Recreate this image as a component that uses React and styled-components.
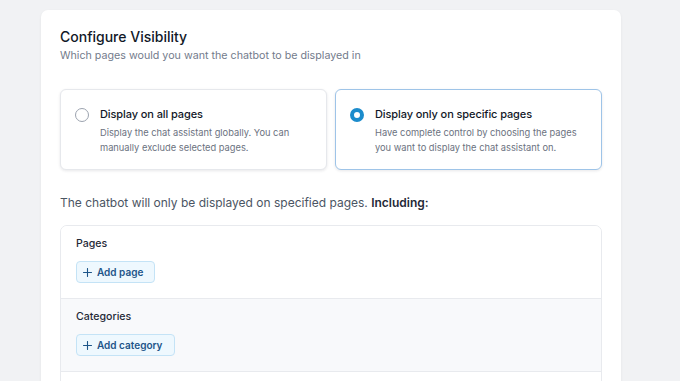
import React from "react";
import styled, { createGlobalStyle } from "styled-components";

const Global = createGlobalStyle`
  html, body { margin: 0; padding: 0; background: #f1f2f4; }
  body { font-family: Inter, "Noto Sans", sans-serif; -webkit-font-smoothing: antialiased; }
  * { box-sizing: border-box; }
`;

const Page = styled.div`
  padding: 10px 0 0 41px;
  height: 381px;
  overflow: hidden;
`;

const Card = styled.div`
  width: 580px;
  background: #fff;
  border-radius: 7px;
  box-shadow: 0 1px 3px rgba(15, 23, 42, 0.06);
  padding: 17px 19px 40px;
`;

const Title = styled.h2`
  margin: 0;
  font-size: 14px;
  line-height: 20px;
  font-weight: 500;
  color: #111827;
`;

const Subtitle = styled.p`
  margin: 0;
  font-size: 10.7px;
  line-height: 18px;
  color: #737b8c;
`;

const Options = styled.div`
  margin-top: 24px;
  display: grid;
  grid-template-columns: 1fr 1fr;
  gap: 8px;
`;

const Option = styled.div`
  display: flex;
  gap: 11px;
  height: 81px;
  padding: 16px 14px 14px;
  border: 1px solid ${(p) => (p.$selected ? "#9ec4e8" : "#e6e8ec")};
  border-radius: 6px;
  background: #fff;
  box-shadow: 0 1px 3px rgba(15, 23, 42, 0.1);
`;

const Radio = styled.span`
  flex: none;
  width: 14px;
  height: 14px;
  margin-top: 1.5px;
  border-radius: 50%;
  border: ${(p) => (p.$checked ? "4px solid #1c8ccc" : "1px solid #9ca3af")};
  background: #fff;
`;

const OptionBody = styled.div`
  display: flex;
  flex-direction: column;
  max-width: 205px;
`;

const OptionTitle = styled.div`
  font-size: 11px;
  line-height: 17px;
  font-weight: 500;
  color: #111827;
  letter-spacing: -0.1px;
`;

const OptionDesc = styled.div`
  margin-top: 2px;
  font-size: 9.3px;
  line-height: 15px;
  color: #6b7280;
`;

const Lead = styled.p`
  margin: 23px 0 0;
  font-size: 12px;
  line-height: 20px;
  color: #4b5563;
  b { font-weight: 600; color: #1f2937; }
`;

const Table = styled.div`
  margin-top: 12px;
  border: 1px solid #e8eaee;
  border-radius: 7px;
  overflow: hidden;
`;

const Section = styled.div`
  padding: 9px 15px 15px;
  background: ${(p) => (p.$alt ? "#f8f9fb" : "#fff")};
  border-top: ${(p) => (p.$first ? "none" : "1px solid #e8eaee")};
  display: flex;
  flex-direction: column;
  align-items: flex-start;
  gap: 9px;
  min-height: 72px;
`;

const Label = styled.div`
  font-size: 10.6px;
  line-height: 17px;
  font-weight: 500;
  color: #1f2937;
`;

const AddButton = styled.button`
  display: inline-flex;
  align-items: center;
  gap: 5px;
  height: 22px;
  padding: 0 11px 0 6px;
  border: 1px solid #c4e3f6;
  border-radius: 4px;
  background: #eef8fe;
  color: #1d5589;
  font-family: inherit;
  font-size: 10px;
  font-weight: 600;
  cursor: pointer;
  svg { flex: none; }
`;

const PlusIcon = () => (
  <svg width="9" height="9" viewBox="0 0 9 9" fill="none">
    <path d="M4.5 0.5v8M0.5 4.5h8" stroke="#1d5589" strokeWidth="1.1" strokeLinecap="round" />
  </svg>
);

export default function App() {
  return (
    <>
      <Global />
      <Page>
        <Card>
          <Title>Configure Visibility</Title>
          <Subtitle>Which pages would you want the chatbot to be displayed in</Subtitle>
          <Options>
            <Option>
              <Radio />
              <OptionBody>
                <OptionTitle>Display on all pages</OptionTitle>
                <OptionDesc>
                  Display the chat assistant globally. You can manually exclude selected pages.
                </OptionDesc>
              </OptionBody>
            </Option>
            <Option $selected>
              <Radio $checked />
              <OptionBody>
                <OptionTitle>Display only on specific pages</OptionTitle>
                <OptionDesc>
                  Have complete control by choosing the pages you want to display the chat assistant on.
                </OptionDesc>
              </OptionBody>
            </Option>
          </Options>
          <Lead>
            The chatbot will only be displayed on specified pages. <b>Including:</b>
          </Lead>
          <Table>
            <Section $first>
              <Label>Pages</Label>
              <AddButton>
                <PlusIcon />
                Add page
              </AddButton>
            </Section>
            <Section $alt>
              <Label>Categories</Label>
              <AddButton>
                <PlusIcon />
                Add category
              </AddButton>
            </Section>
            <Section />
          </Table>
        </Card>
      </Page>
    </>
  );
}
